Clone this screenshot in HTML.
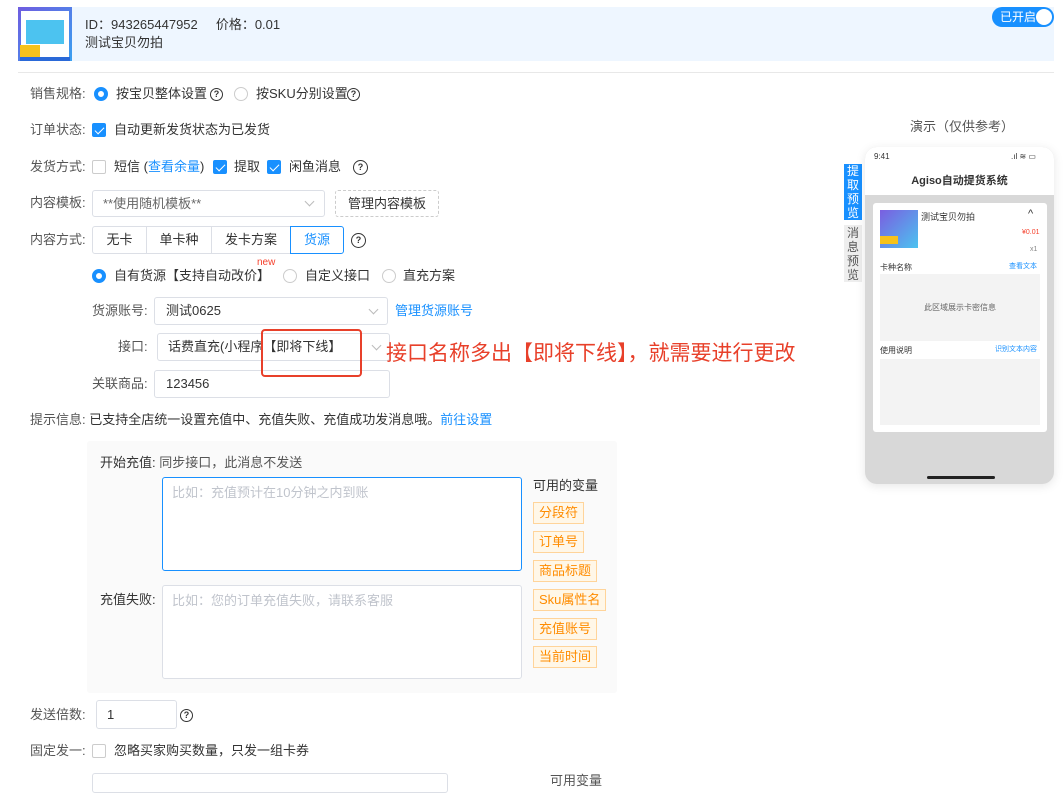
<!DOCTYPE html>
<html><head><meta charset="utf-8"><style>
*{box-sizing:border-box;margin:0;padding:0}
body{width:1064px;height:780px;overflow:hidden;background:#fff;font-family:"Liberation Sans","Noto Sans CJK SC",sans-serif;font-size:13px;line-height:18px;color:#333;position:relative}
.a{position:absolute;white-space:nowrap}
.lbl{color:#555}
.box{position:absolute;border:1px solid #dcdfe6;border-radius:3px;background:#fff}
.radio{position:absolute;width:14px;height:14px;border-radius:50%;border:1px solid #ccc;background:#fff}
.radio.on{border:4px solid #1890ff}
.cb{position:absolute;width:14px;height:14px;border:1px solid #ccc;border-radius:2px;background:#fff}
.cb.on{background:#1890ff;border-color:#1890ff}
.cb.on:after{content:"";position:absolute;left:4px;top:1px;width:4px;height:8px;border:solid #fff;border-width:0 1.5px 1.5px 0;transform:rotate(45deg)}
.q{position:absolute;width:13px;height:13px;border:1.3px solid #333;border-radius:50%;font-size:9px;line-height:11px;text-align:center;font-weight:bold}
.blue{color:#1890ff}
.arrow{position:absolute;width:7px;height:7px;border:solid #bbb;border-width:0 1px 1px 0;transform:rotate(45deg)}
.tag{position:absolute;left:533px;height:22px;border:1px solid #ffd49a;background:#fff7e8;color:#ff8c00;font-size:13px;line-height:20px;padding:0 5px}
.seg{position:absolute;top:226px;height:28px;border:1px solid #dcdfe6;line-height:26px;text-align:center}
</style></head><body>
<div class="a" style="left:72px;top:7px;width:982px;height:54px;background:#eef6ff"></div>
<div class="a" style="left:18px;top:7px;width:54px;height:54px;background:linear-gradient(135deg,#6f5ce0,#3aa0f0)">
 <div class="a" style="left:3px;top:4px;width:48px;height:46px;background:#fff"></div>
 <div class="a" style="left:8px;top:13px;width:38px;height:24px;background:#4cc3f0"></div>
 <div class="a" style="left:2px;top:38px;width:20px;height:12px;background:#f6c21b"></div>
 <div class="a" style="left:2px;top:50px;width:50px;height:4px;background:#2a69d8"></div>
</div>
<div class="a" style="left:85px;top:16px;color:#333">ID：943265447952&nbsp;&nbsp;&nbsp;&nbsp;&nbsp;价格：0.01</div>
<div class="a" style="left:85px;top:34px">测试宝贝勿拍</div>
<div class="a" style="left:992px;top:7px;width:62px;height:20px;border-radius:10px;background:#1890ff;color:#fff;font-size:12px;line-height:20px;padding-left:8px">已开启<div class="a" style="left:44px;top:2px;width:16px;height:16px;border-radius:50%;background:#fff"></div></div>
<div class="a" style="left:18px;top:72px;width:1036px;height:1px;background:#e8e8e8"></div>

<div class="a lbl" style="left:30px;top:85px">销售规格:</div>
<div class="radio on" style="left:94px;top:87px"></div><div class="a" style="left:116px;top:85px">按宝贝整体设置</div><div class="q" style="left:210px;top:88px">?</div>
<div class="radio" style="left:234px;top:87px"></div><div class="a" style="left:256px;top:85px">按SKU分别设置</div><div class="q" style="left:347px;top:88px">?</div>

<div class="a lbl" style="left:30px;top:121px">订单状态:</div>
<div class="cb on" style="left:92px;top:123px"></div><div class="a" style="left:114px;top:121px">自动更新发货状态为已发货</div>

<div class="a lbl" style="left:30px;top:158px">发货方式:</div>
<div class="cb" style="left:92px;top:160px"></div><div class="a" style="left:114px;top:158px">短信 (<span class="blue">查看余量</span>)</div>
<div class="cb on" style="left:213px;top:160px"></div><div class="a" style="left:234px;top:158px">提取</div>
<div class="cb on" style="left:267px;top:160px"></div><div class="a" style="left:289px;top:158px">闲鱼消息</div>
<div class="q" style="left:353px;top:160px;width:15px;height:15px;line-height:13px">?</div>

<div class="a lbl" style="left:30px;top:194px">内容模板:</div>
<div class="box" style="left:92px;top:190px;width:233px;height:27px"><div class="a" style="left:10px;top:4px;color:#666">**使用随机模板**</div><div class="arrow" style="left:213px;top:7px"></div></div>
<div class="a" style="left:335px;top:190px;width:104px;height:27px;border:1px dashed #ccc;border-radius:3px;text-align:center;line-height:25px">管理内容模板</div>

<div class="a lbl" style="left:30px;top:231px">内容方式:</div>
<div class="seg" style="left:92px;width:55px;border-radius:3px 0 0 3px">无卡</div>
<div class="seg" style="left:146px;width:66px">单卡种</div>
<div class="seg" style="left:211px;width:80px">发卡方案</div>
<div class="seg" style="left:290px;width:54px;border-color:#1890ff;color:#1890ff;border-radius:0 3px 3px 0">货源</div>
<div class="q" style="left:351px;top:233px;width:15px;height:15px;line-height:13px">?</div>

<div class="radio on" style="left:92px;top:269px"></div><div class="a" style="left:114px;top:267px">自有货源【支持自动改价】</div>
<div class="a" style="left:257px;top:257px;color:#f5412d;font-size:10px;line-height:12px">new</div>
<div class="radio" style="left:283px;top:269px"></div><div class="a" style="left:305px;top:267px">自定义接口</div>
<div class="radio" style="left:382px;top:269px"></div><div class="a" style="left:403px;top:267px">直充方案</div>

<div class="a lbl" style="left:92px;top:302px">货源账号:</div>
<div class="box" style="left:154px;top:297px;width:234px;height:28px"><div class="a" style="left:11px;top:4px">测试0625</div><div class="arrow" style="left:215px;top:8px"></div></div>
<div class="a blue" style="left:395px;top:302px">管理货源账号</div>

<div class="a lbl" style="left:118px;top:338px">接口:</div>
<div class="box" style="left:157px;top:333px;width:233px;height:28px"><div class="a" style="left:10px;top:4px">话费直充(小程序【即将下线】</div><div class="arrow" style="left:215px;top:8px"></div></div>

<div class="a lbl" style="left:92px;top:375px">关联商品:</div>
<div class="box" style="left:154px;top:370px;width:236px;height:28px"><div class="a" style="left:11px;top:4px">123456</div></div>
<div class="a" style="left:261px;top:329px;width:101px;height:48px;border:2px solid #e8402a;border-radius:4px;z-index:5"></div>
<div class="a" style="left:386px;top:342px;color:#e8402a;font-size:21px;line-height:24px">接口名称多出【即将下线】，就需要进行更改</div>

<div class="a lbl" style="left:30px;top:411px">提示信息: <span style="color:#333">已支持全店统一设置充值中、充值失败、充值成功发消息哦。</span><span class="blue">前往设置</span></div>

<div class="a" style="left:87px;top:441px;width:530px;height:252px;background:#fafafa;border-radius:3px"></div>
<div class="a" style="left:100px;top:454px">开始充值: <span style="color:#555">同步接口，此消息不发送</span></div>
<div class="box" style="left:162px;top:477px;width:360px;height:94px;border-color:#1890ff"><div class="a" style="left:9px;top:6px;color:#c0c4cc">比如：充值预计在10分钟之内到账</div></div>
<div class="a" style="left:533px;top:477px">可用的变量</div>
<div class="tag" style="top:502px">分段符</div>
<div class="tag" style="top:531px">订单号</div>
<div class="tag" style="top:560px">商品标题</div>
<div class="tag" style="top:589px">Sku属性名</div>
<div class="tag" style="top:618px">充值账号</div>
<div class="tag" style="top:646px">当前时间</div>
<div class="a" style="left:100px;top:591px">充值失败:</div>
<div class="box" style="left:162px;top:585px;width:360px;height:94px"><div class="a" style="left:9px;top:6px;color:#c0c4cc">比如：您的订单充值失败，请联系客服</div></div>

<div class="a lbl" style="left:30px;top:706px">发送倍数:</div>
<div class="box" style="left:96px;top:700px;width:81px;height:29px"><div class="a" style="left:10px;top:5px">1</div></div>
<div class="q" style="left:180px;top:709px">?</div>

<div class="a lbl" style="left:30px;top:742px">固定发一:</div>
<div class="cb" style="left:92px;top:744px"></div><div class="a" style="left:114px;top:742px">忽略买家购买数量，只发一组卡券</div>
<div class="box" style="left:92px;top:773px;width:356px;height:20px"></div>
<div class="a" style="left:550px;top:772px;color:#555">可用变量</div>

<div class="a" style="left:910px;top:118px;color:#555">演示（仅供参考）</div>
<div class="a" style="left:844px;top:164px;width:18px;height:56px;background:#1890ff;color:#fff;font-size:12px;line-height:14px;text-align:center;white-space:normal">提取预览</div>
<div class="a" style="left:844px;top:225px;width:18px;height:57px;background:#eee;color:#555;font-size:12px;line-height:14px;text-align:center;white-space:normal;padding-top:1px">消息预览</div>
<div class="a" style="left:865px;top:147px;width:189px;height:337px;background:#d8d8d8;border-radius:12px;overflow:hidden;box-shadow:0 2px 10px rgba(0,0,0,.1)">
 <div class="a" style="left:0;top:0;width:189px;height:48px;background:#fff"></div>
 <div class="a" style="left:9px;top:5px;font-size:8px;line-height:10px;color:#333">9:41</div>
 <div class="a" style="left:146px;top:5px;font-size:8px;line-height:10px;color:#333">.ıl ≋ ▭</div>
 <div class="a" style="left:0;top:27px;width:189px;text-align:center;font-size:11px;line-height:14px;font-weight:bold;color:#333">Agiso自动提货系统</div>
 <div class="a" style="left:8px;top:56px;width:174px;height:229px;background:#fff;border-radius:3px;line-height:12px">
  <div class="a" style="left:7px;top:7px;width:38px;height:38px;background:linear-gradient(135deg,#7a5ee0,#4cc3f0)"><div class="a" style="left:0;top:26px;width:18px;height:8px;background:#f6c21b"></div></div>
  <div class="a" style="left:48px;top:8px;font-size:9px">测试宝贝勿拍</div>
  <div class="a" style="left:155px;top:5px;font-size:11px">^</div>
  <div class="a" style="left:149px;top:24px;font-size:7px;color:#f5412d">¥0.01</div>
  <div class="a" style="left:157px;top:41px;font-size:7px;color:#888">x1</div>
  <div class="a" style="left:7px;top:59px;font-size:8px">卡种名称</div>
  <div class="a" style="left:136px;top:58px;font-size:7px;color:#1890ff">查看文本</div>
  <div class="a" style="left:7px;top:71px;width:160px;height:67px;background:#f3f3f3;font-size:8px;color:#666;text-align:center;line-height:67px">此区域展示卡密信息</div>
  <div class="a" style="left:7px;top:142px;font-size:8px">使用说明</div>
  <div class="a" style="left:122px;top:141px;font-size:7px;color:#1890ff">识别文本内容</div>
  <div class="a" style="left:7px;top:156px;width:160px;height:66px;background:#f3f3f3"></div>
 </div>
 <div class="a" style="left:62px;top:329px;width:68px;height:3px;background:#222;border-radius:2px"></div>
</div>
</body></html>
